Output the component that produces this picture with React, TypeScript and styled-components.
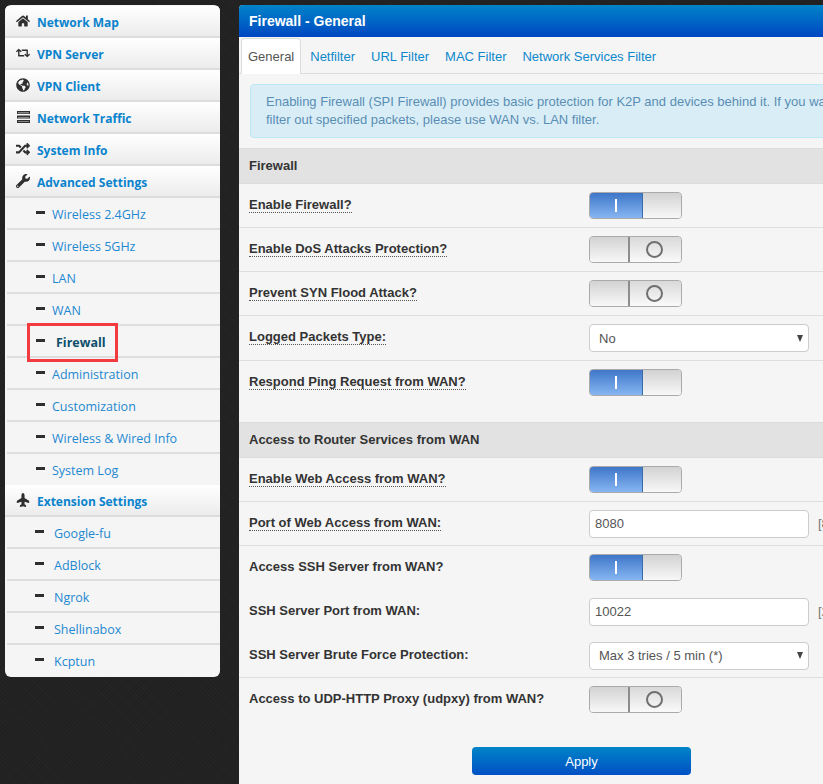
import styled, { createGlobalStyle } from "styled-components";
import { FaHome, FaRetweet, FaGlobeAmericas, FaRandom, FaWrench, FaPlane } from "react-icons/fa";
import type { ReactNode } from "react";

const GlobalStyle = createGlobalStyle`
  html, body {
    margin: 0;
    height: 784px;
    overflow: hidden;
    background-color: #222;
    background-image:
      repeating-linear-gradient(45deg, rgba(255,255,255,.012) 0 1px, transparent 1px 3px),
      repeating-linear-gradient(-45deg, rgba(0,0,0,.07) 0 1px, transparent 1px 3px);
  }
  * { box-sizing: border-box; }
`;

const Page = styled.div`
  display: flex;
  align-items: flex-start;
  gap: 19px;
  width: 1100px;
  padding-top: 5px;
  padding-left: 5px;
  font-family: "Liberation Sans", Arial, sans-serif;
`;

const Sidebar = styled.nav`
  flex: none;
  width: 215px;
  height: 672px;
  padding-top: 1px;
  background: #f5f5f5;
  border-radius: 6px;
  overflow: hidden;
`;

const HeadRow = styled.div`
  display: flex;
  align-items: center;
  height: 32px;
  padding-left: 11px;
  padding-top: 2px;
  background: linear-gradient(#ffffff, #ececec);
  border-bottom: 2px solid #dcdcdc;
`;

const HeadIcon = styled.span`
  display: flex;
  justify-content: center;
  width: 14px;
  margin-top: -2px;
  margin-right: 7px;
  color: #2f2f2f;
  font-size: 14px;
`;

const HeadLabel = styled.span`
  font-family: "Open Sans", sans-serif;
  font-size: 12px;
  font-weight: 700;
  color: #0a83cd;
`;

const UpPlane = styled(FaPlane)`
  transform: rotate(-90deg);
`;

const SubRow = styled.div<{ $deep?: boolean }>`
  position: relative;
  display: flex;
  align-items: center;
  height: 32px;
  margin-left: 2px;
  padding-top: 2px;
  padding-left: ${(p) => (p.$deep ? 28 : 29)}px;
  border-bottom: 2px solid #dedede;
  &:last-child {
    height: 31px;
    border-bottom: 1px solid transparent;
  }
`;

const Dash = styled.span`
  flex: none;
  width: 9px;
  height: 3px;
  margin-top: -3px;
  background: #2f2f2f;
`;

const SubLabel = styled.span<{ $deep?: boolean; $active?: boolean }>`
  margin-left: ${(p) => (p.$active ? 11 : p.$deep ? 10 : 7)}px;
  font-family: "Open Sans", sans-serif;
  font-size: 12.5px;
  font-weight: ${(p) => (p.$active ? 700 : 400)};
  color: ${(p) => (p.$active ? "#0d4f6c" : "#1e88d0")};
`;

const Highlight = styled.span`
  position: absolute;
  left: 20px;
  top: -3px;
  width: 91px;
  height: 39px;
  border: 3px solid #f23b3f;
`;

const Panel = styled.main`
  flex: none;
  width: 800px;
  height: 779px;
  background: #f5f5f5;
  border-radius: 4px 0 0 0;
  overflow: hidden;
`;

const Header = styled.header`
  display: flex;
  align-items: center;
  height: 32px;
  padding-left: 10px;
  background: linear-gradient(#0084c8, #0047c2);
  color: #fff;
  font-size: 14px;
  font-weight: 700;
`;

const Tabs = styled.div`
  display: flex;
  height: 37px;
  padding-left: 2px;
  border-bottom: 1px solid #dcdcdc;
`;

const Tab = styled.div<{ $active?: boolean }>`
  display: flex;
  align-items: center;
  height: 36px;
  margin-top: 1px;
  margin-right: 2px;
  padding: 0 6px 1px;
  font-size: 13px;
  color: ${(p) => (p.$active ? "#555" : "#0d88cc")};
  background: ${(p) => (p.$active ? "#fff" : "transparent")};
  border: 1px solid ${(p) => (p.$active ? "#dcdcdc" : "transparent")};
  border-bottom: 0;
  border-radius: 4px 4px 0 0;
`;

const Alert = styled.div`
  margin: 10px 0 10px 11px;
  height: 54px;
  padding: 8px 15px;
  background: #d9edf7;
  border: 1px solid #bce8f1;
  border-radius: 4px;
  color: #5a8db3;
  font-size: 13px;
  line-height: 18px;
  white-space: nowrap;
`;

const Section = styled.div`
  display: flex;
  align-items: center;
  height: 36px;
  padding-left: 10px;
  padding-bottom: 2px;
  background: #e2e2e2;
  border-top: 1px solid #dcdcdc;
  border-bottom: 1px solid #dcdcdc;
  color: #333;
  font-size: 13px;
  font-weight: 700;
`;

const Row = styled.div<{ $flush?: boolean; $height?: number }>`
  display: flex;
  align-items: center;
  height: ${(p) => p.$height ?? 44}px;
  padding-left: 10px;
  border-bottom: 1px solid ${(p) => (p.$flush ? "transparent" : "#dedede")};
`;

const Label = styled.span<{ $hint?: boolean }>`
  flex: none;
  width: 340px;
  padding-bottom: 3px;
  font-size: 13px;
  font-weight: 700;
  color: #333;
  span {
    border-bottom: ${(p) => (p.$hint ? "1px dotted #555" : "0")};
  }
`;

const Toggle = styled.div`
  display: flex;
  width: 93px;
  height: 27px;
  border: 1px solid #aaa;
  border-radius: 4px;
  overflow: hidden;
  background: linear-gradient(#dcdcdc, #f7f7f7);
`;

const OnFace = styled.div`
  display: flex;
  align-items: center;
  justify-content: center;
  width: 53px;
  background: linear-gradient(#3f76c9, #86b6f1);
  border-right: 1px solid #3a6aa8;
  &::before {
    content: "";
    width: 2px;
    height: 13px;
    background: #fff;
  }
`;

const OffFace = styled.div`
  display: flex;
  flex: 1;
  align-items: center;
  justify-content: center;
  padding-right: 2px;
  background: linear-gradient(#d9d9d9, #fafafa);
  border-left: 2px solid #8d8d8d;
  &::before {
    content: "";
    width: 13px;
    height: 13px;
    border: 2px solid #707070;
    border-radius: 50%;
  }
`;

const Knob = styled.div<{ $wide?: boolean }>`
  width: 38px;
  flex: ${(p) => (p.$wide ? 1 : "none")};
  background: linear-gradient(#d2d2d2, #f8f8f8);
`;

const Field = styled.div`
  display: flex;
  align-items: center;
  width: 220px;
  height: 28px;
  padding-left: 5px;
  background: #fff;
  border: 1px solid #ccc;
  border-radius: 4px;
  color: #555;
  font-size: 13px;
`;

const Picker = styled(Field)`
  justify-content: space-between;
  padding: 0 5px 0 9px;
  &::after {
    content: "";
    border-left: 3.5px solid transparent;
    border-right: 3.5px solid transparent;
    border-top: 7px solid #444;
  }
`;

const Note = styled.span`
  margin-left: 9px;
  color: #777;
  font-size: 13px;
  white-space: nowrap;
`;

const Footer = styled.div`
  display: flex;
  margin-top: 25px;
  padding-left: 233px;
`;

const Apply = styled.button`
  width: 219px;
  height: 28px;
  padding: 0;
  border: 0;
  border-radius: 4px;
  background: linear-gradient(#0084c8, #0050c4);
  color: #fff;
  font-family: inherit;
  font-size: 13px;
`;

const Switch = ({ on }: { on?: boolean }) =>
  on ? (
    <Toggle>
      <OnFace />
      <Knob $wide />
    </Toggle>
  ) : (
    <Toggle>
      <Knob />
      <OffFace />
    </Toggle>
  );

const BarsIcon = () => (
  <svg width="13" height="12" viewBox="0 0 13 12" fill="#2f2f2f">
    <path d="M0 0h13v3H0zM0 4.5h13v3H0zM0 9h13v3H0z" />
    <path d="M1 1.6h11v.6H1zM1 6h11v.6H1zM1 10.5h11v.6H1z" fill="#ddd" />
  </svg>
);

const head = (icon: ReactNode, label: string) => (
  <HeadRow>
    <HeadIcon>{icon}</HeadIcon>
    <HeadLabel>{label}</HeadLabel>
  </HeadRow>
);

const advanced = ["Wireless 2.4GHz", "Wireless 5GHz", "LAN", "WAN", "Firewall", "Administration", "Customization", "Wireless & Wired Info", "System Log"];
const extension = ["Google-fu", "AdBlock", "Ngrok", "Shellinabox", "Kcptun"];

export default function App() {
  return (
    <>
      <GlobalStyle />
      <Page>
        <Sidebar>
          {head(<FaHome />, "Network Map")}
          {head(<FaRetweet />, "VPN Server")}
          {head(<FaGlobeAmericas />, "VPN Client")}
          {head(<BarsIcon />, "Network Traffic")}
          {head(<FaRandom />, "System Info")}
          {head(<FaWrench />, "Advanced Settings")}
          <div>
            {advanced.map((item) => (
              <SubRow key={item}>
                <Dash />
                <SubLabel $active={item === "Firewall"}>{item}</SubLabel>
                {item === "Firewall" && <Highlight />}
              </SubRow>
            ))}
          </div>
          {head(<UpPlane />, "Extension Settings")}
          <div>
            {extension.map((item) => (
              <SubRow key={item} $deep>
                <Dash />
                <SubLabel $deep>{item}</SubLabel>
              </SubRow>
            ))}
          </div>
        </Sidebar>
        <Panel>
          <Header>Firewall - General</Header>
          <Tabs>
            <Tab $active>General</Tab>
            <Tab>Netfilter</Tab>
            <Tab>URL Filter</Tab>
            <Tab>MAC Filter</Tab>
            <Tab>Network Services Filter</Tab>
          </Tabs>
          <Alert>
            Enabling Firewall (SPI Firewall) provides basic protection for K2P and devices behind it. If you want to
            <br />
            filter out specified packets, please use WAN vs. LAN filter.
          </Alert>
          <Section>Firewall</Section>
          <Row>
            <Label $hint><span>Enable Firewall?</span></Label>
            <Switch on />
          </Row>
          <Row>
            <Label $hint><span>Enable DoS Attacks Protection?</span></Label>
            <Switch />
          </Row>
          <Row>
            <Label $hint><span>Prevent SYN Flood Attack?</span></Label>
            <Switch />
          </Row>
          <Row $height={45}>
            <Label $hint><span>Logged Packets Type:</span></Label>
            <Picker>No</Picker>
          </Row>
          <Row $flush>
            <Label $hint><span>Respond Ping Request from WAN?</span></Label>
            <Switch on />
          </Row>
          <Row $flush $height={17} />
          <Section>Access to Router Services from WAN</Section>
          <Row>
            <Label $hint><span>Enable Web Access from WAN?</span></Label>
            <Switch on />
          </Row>
          <Row>
            <Label $hint><span>Port of Web Access from WAN:</span></Label>
            <Field>8080</Field>
            <Note>[8080]</Note>
          </Row>
          <Row $flush>
            <Label><span>Access SSH Server from WAN?</span></Label>
            <Switch on />
          </Row>
          <Row $flush>
            <Label><span>SSH Server Port from WAN:</span></Label>
            <Field>10022</Field>
            <Note>[22]</Note>
          </Row>
          <Row>
            <Label><span>SSH Server Brute Force Protection:</span></Label>
            <Picker>Max 3 tries / 5 min (*)</Picker>
          </Row>
          <Row $flush>
            <Label><span>Access to UDP-HTTP Proxy (udpxy) from WAN?</span></Label>
            <Switch />
          </Row>
          <Footer>
            <Apply>Apply</Apply>
          </Footer>
        </Panel>
      </Page>
    </>
  );
}
